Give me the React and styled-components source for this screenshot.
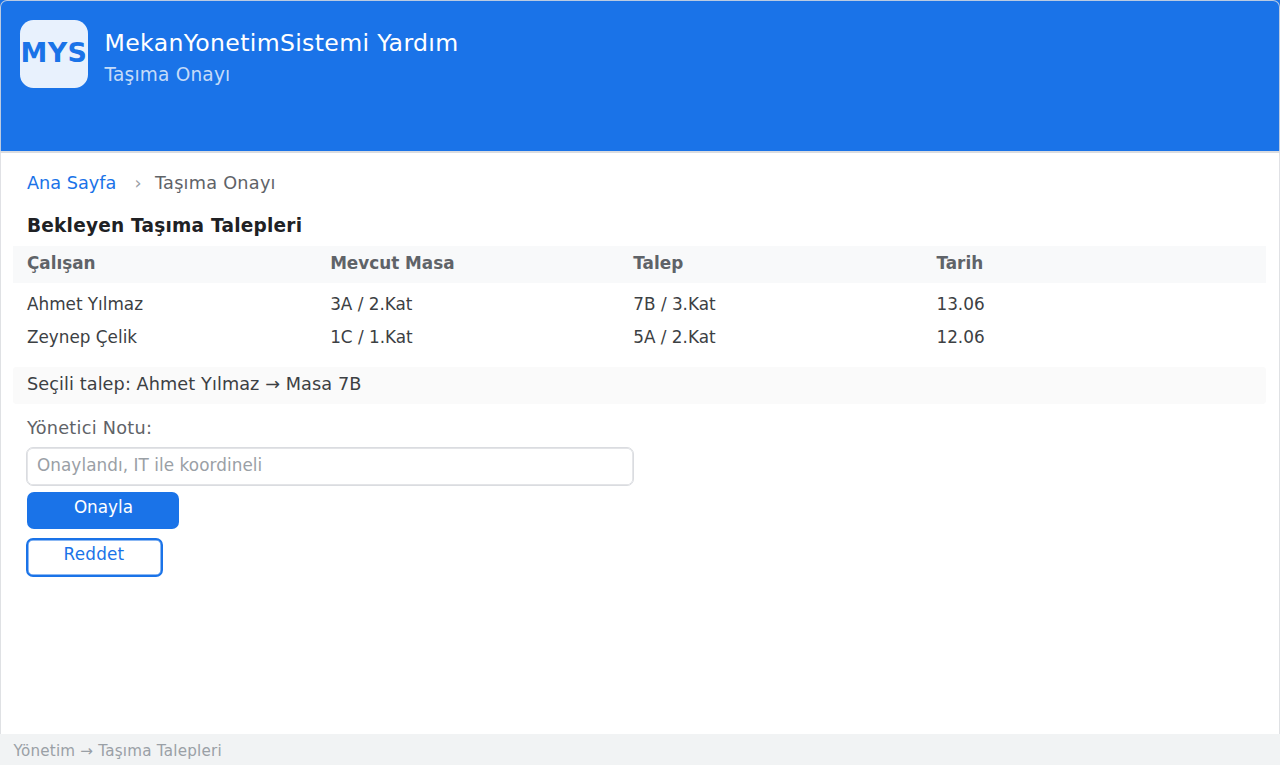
import { useState } from "react";
import styled, { createGlobalStyle } from "styled-components";

const requests = [
  { name: "Ahmet Yılmaz", current: "3A / 2.Kat", target: "7B / 3.Kat", date: "13.06" },
  { name: "Zeynep Çelik", current: "1C / 1.Kat", target: "5A / 2.Kat", date: "12.06" },
];

export default function App() {
  const [note, setNote] = useState("");
  return (
    <>
      <GlobalStyle />
      <Page>
        <Header>
          <Logo>MYS</Logo>
          <HeaderText>
            <Title>MekanYonetimSistemi Yardım</Title>
            <Subtitle>Taşıma Onayı</Subtitle>
          </HeaderText>
        </Header>
        <Content>
          <Breadcrumb>
            <BreadcrumbLink href="#">Ana Sayfa</BreadcrumbLink>
            <Separator>›</Separator>
            <Current>Taşıma Onayı</Current>
          </Breadcrumb>
          <SectionTitle>Bekleyen Taşıma Talepleri</SectionTitle>
          <TableHead>
            <span>Çalışan</span>
            <span>Mevcut Masa</span>
            <span>Talep</span>
            <span>Tarih</span>
          </TableHead>
          <TableBody>
            {requests.map((request) => (
              <TableRow key={request.name}>
                <span>{request.name}</span>
                <span>{request.current}</span>
                <span>{request.target}</span>
                <span>{request.date}</span>
              </TableRow>
            ))}
          </TableBody>
          <Selected>Seçili talep: Ahmet Yılmaz → Masa 7B</Selected>
          <Form onSubmit={(e) => e.preventDefault()}>
            <Label htmlFor="note">Yönetici Notu:</Label>
            <NoteInput
              id="note"
              value={note}
              placeholder="Onaylandı, IT ile koordineli"
              onChange={(e) => setNote(e.target.value)}
            />
            <Button type="submit">Onayla</Button>
            <Button type="button" $outline>
              Reddet
            </Button>
          </Form>
        </Content>
        <Footer>Yönetim → Taşıma Talepleri</Footer>
      </Page>
    </>
  );
}

const GlobalStyle = createGlobalStyle`
  * {
    box-sizing: border-box;
  }
  body {
    margin: 0;
    font-family: "DejaVu Sans", sans-serif;
  }
`;
const Page = styled.div`
  position: relative;
  display: flex;
  flex-direction: column;
  width: 1280px;
  height: 765px;
  overflow: hidden;
  background: #fff;
  &::after {
    content: "";
    position: absolute;
    inset: 0 0 31px;
    border: 1px solid rgba(218, 220, 224, 0.84);
    border-bottom: none;
    border-radius: 7px 7px 0 0;
    pointer-events: none;
  }
`;
const Header = styled.header`
  display: flex;
  align-items: flex-start;
  gap: 17px;
  height: 153px;
  padding: 20.2px;
  background: #1a73e8;
  border-bottom: 2px solid #dadce0;
`;
const Logo = styled.div`
  display: flex;
  justify-content: center;
  width: 67.4px;
  height: 67.4px;
  border-radius: 13.5px;
  background: rgba(255, 255, 255, 0.9);
  color: #1a73e8;
  font-size: 26.95px;
  font-weight: bold;
  letter-spacing: 0.3px;
  line-height: 66.4px;
`;
const HeaderText = styled.div`
  padding-top: 6.8px;
`;
const Title = styled.h1`
  margin: 0;
  color: #fff;
  font-size: 23.58px;
  font-weight: normal;
  letter-spacing: 0.33px;
  line-height: 32px;
`;
const Subtitle = styled.p`
  margin: 0;
  color: rgba(255, 255, 255, 0.75);
  font-size: 18.53px;
  letter-spacing: 0.2px;
  line-height: 32px;
`;
const Content = styled.main`
  flex: 1;
  padding: 15px 13.6px 0 13.47px;
`;
const Breadcrumb = styled.nav`
  display: flex;
  padding-left: 13.5px;
  color: #5f6368;
  font-size: 17.68px;
  line-height: 31px;
`;
const BreadcrumbLink = styled.a`
  width: 107.5px;
  color: #1a73e8;
  text-decoration: none;
`;
const Separator = styled.span`
  width: 20.5px;
  color: #9aa0a6;
`;
const Current = styled.span`
  letter-spacing: 0.25px;
`;
const SectionTitle = styled.h2`
  height: 47px;
  margin: 0;
  padding: 9px 0 0 13.5px;
  color: #202124;
  font-size: 18.53px;
  letter-spacing: 0.22px;
  line-height: 35px;
`;
const TableRow = styled.div`
  display: grid;
  grid-template-columns: repeat(4, 303.16px);
  padding-left: 13.5px;
  font-size: 16.84px;
  line-height: 33px;
`;
const TableHead = styled(TableRow)`
  height: 37px;
  background: #f8f9fa;
  color: #5f6368;
  font-weight: bold;
  line-height: 35px;
`;
const TableBody = styled.div`
  height: 84px;
  padding-top: 5px;
  color: #3c4043;
`;
const Selected = styled.div`
  height: 37px;
  padding-left: 13.5px;
  border-radius: 3.4px;
  background: #fafafa;
  color: #3c4043;
  font-size: 17.68px;
  letter-spacing: 0.083px;
  line-height: 35px;
`;
const Form = styled.form`
  display: flex;
  flex-direction: column;
  align-items: flex-start;
  padding-left: 12.5px;
`;
const Label = styled.label`
  height: 43px;
  padding-left: 1px;
  color: #5f6368;
  font-size: 17.68px;
  letter-spacing: 0.26px;
  line-height: 49px;
`;
const NoteInput = styled.input`
  width: 608px;
  height: 39px;
  padding: 0 10px 4px;
  border: 1px solid #dadce0;
  border-radius: 7px;
  outline: none;
  box-shadow: inset 0 0 0 0.7px #dadce0;
  font-family: inherit;
  font-size: 16.84px;
  letter-spacing: 0.06px;
  color: #3c4043;
  &::placeholder {
    color: #9aa0a6;
  }
`;
const Button = styled.button`
  width: ${(props) => (props.$outline ? "137px" : "152px")};
  height: ${(props) => (props.$outline ? "39px" : "37px")};
  margin: ${(props) => (props.$outline ? "9px 0 0" : "6px 0 0 1px")};
  padding: ${(props) => (props.$outline ? "0 1px 8px 0" : "0 0 7px 1px")};
  border: ${(props) => (props.$outline ? "2px solid #1a73e8" : "none")};
  border-radius: 7px;
  box-shadow: ${(props) => (props.$outline ? "inset 0 0 0 0.5px #1a73e8" : "none")};
  background: ${(props) => (props.$outline ? "#fff" : "#1a73e8")};
  color: ${(props) => (props.$outline ? "#1a73e8" : "#fff")};
  font-family: inherit;
  font-size: 16.84px;
  letter-spacing: ${(props) => (props.$outline ? "0.2px" : "0")};
`;
const Footer = styled.footer`
  height: 31px;
  padding-left: 13.5px;
  background: #f1f3f4;
  color: #9aa0a6;
  font-size: 15.16px;
  letter-spacing: 0.21px;
  line-height: 34px;
`;
